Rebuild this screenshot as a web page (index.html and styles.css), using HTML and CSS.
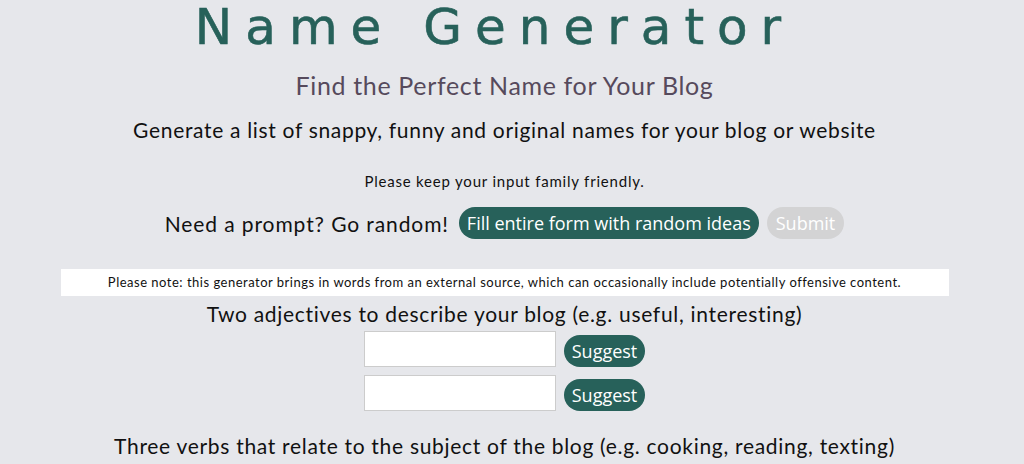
FILE: index.html
```html
<!DOCTYPE html>
<html lang="en">
  <head>
    <meta charset="UTF-8">
    <title>Name Generator</title>
    <link rel="stylesheet" href="styles.css">
  </head>
  <body>
    <div class="page">
      <h1 class="title">Name Generator</h1>
      <h2 class="subtitle">Find the Perfect Name for Your Blog</h2>
      <p class="intro">Generate a list of snappy, funny and original names for your blog or website</p>
      <p class="friendly">Please keep your input family friendly.</p>
      <div class="random-row">
        <span class="prompt">Need a prompt? Go random!</span>
        <button class="btn">Fill entire form with random ideas</button>
        <button class="btn btn-off">Submit</button>
      </div>
      <p class="note">Please note: this generator brings in words from an external source, which can occasionally include potentially offensive content.</p>
      <div class="field">
        <label class="label">Two adjectives to describe your blog (e.g. useful, interesting)</label>
        <div class="input-row">
          <input type="text" class="box">
          <button class="btn btn-small">Suggest</button>
        </div>
        <div class="input-row">
          <input type="text" class="box">
          <button class="btn btn-small">Suggest</button>
        </div>
      </div>
      <div class="field">
        <label class="label">Three verbs that relate to the subject of the blog (e.g. cooking, reading, texting)</label>
      </div>
    </div>
  </body>
</html>
```
FILE: styles.css
```css
body {
  margin: 0;
  background-color: #e6e7eb;
  font-family: Lato, "Open Sans", sans-serif;
  color: #111;
  overflow: hidden;
}
.page {
  width: 1009px;
  text-align: center;
}
.title {
  margin: 0;
  padding-right: 20px;
  font-family: "DejaVu Sans", sans-serif;
  font-weight: normal;
  font-size: 50px;
  letter-spacing: 13px;
  line-height: 54px;
  color: #27615a;
  -webkit-text-stroke: 0.6px #27615a;
}
.subtitle {
  margin: 16px 0 0;
  font-weight: normal;
  font-size: 25px;
  letter-spacing: 0.65px;
  line-height: 30px;
  color: #564a5c;
}
.intro {
  margin: 16px 0 0;
  font-size: 21px;
  letter-spacing: 0.68px;
  line-height: 28px;
}
.friendly {
  margin: 27px 0 0;
  font-size: 15px;
  letter-spacing: 0.8px;
  line-height: 20px;
}
.random-row {
  display: flex;
  justify-content: center;
  align-items: center;
  gap: 8px;
  margin-top: 16px;
}
.prompt {
  font-size: 21px;
  letter-spacing: 0.9px;
  margin-right: 2px;
}
.btn {
  font-family: "Open Sans", sans-serif;
  font-size: 18px;
  color: #fff;
  background-color: #27615a;
  border: none;
  border-radius: 16px;
  height: 32px;
  padding: 0 8px;
}
.btn-off {
  background-color: #d3d3d4;
  padding: 0 9px;
}
.note {
  width: 888px;
  margin: 30px auto 0;
  background-color: #fff;
  font-size: 13px;
  letter-spacing: 0.5px;
  line-height: 27px;
}
.field {
  display: flex;
  flex-direction: column;
  align-items: center;
}
.label {
  font-size: 21px;
  letter-spacing: 0.7px;
  line-height: 35px;
}
.input-row {
  display: flex;
  align-items: flex-end;
  gap: 8px;
  margin-bottom: 8px;
}
.box {
  width: 192px;
  height: 36px;
  box-sizing: border-box;
  border: 1px solid #ccc;
  background: #fff;
}
.btn-small {
  height: 32px;
}
.field + .field {
  margin-top: 9px;
}
```
